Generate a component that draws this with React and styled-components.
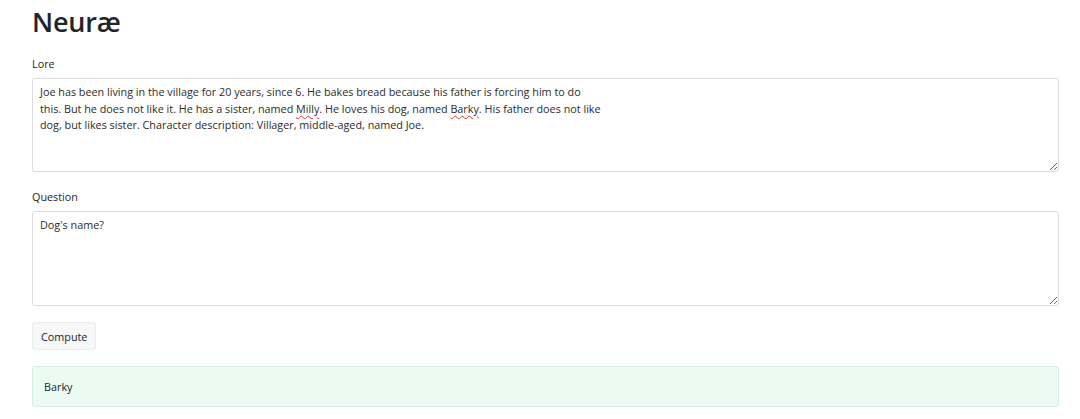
import React from "react";
import styled, { createGlobalStyle } from "styled-components";

const GlobalStyle = createGlobalStyle`
  * { box-sizing: border-box; }
  body {
    margin: 0;
    background: #fff;
    font-family: "Open Sans", "Noto Sans", sans-serif;
    color: #212529;
  }
`;

const Page = styled.div`
  padding: 4px 21px 0 32px;
  display: flex;
  flex-direction: column;
`;

const Title = styled.h1`
  font-size: 27px;
  font-weight: 600;
  line-height: 36px;
  margin: 0 0 17px 0;
  letter-spacing: -0.2px;
`;

const Field = styled.div`
  display: flex;
  flex-direction: column;
  margin-bottom: ${(p) => p.$gap || 18}px;
`;

const Label = styled.label`
  font-size: 10.8px;
  line-height: 14px;
  margin-bottom: 7px;
`;

const TextBox = styled.div`
  height: ${(p) => p.$height || 94}px;
  border: 1px solid #dcdcdc;
  border-radius: 3px;
  padding: 5px 7px;
  font-size: 10.8px;
  line-height: 16.5px;
  white-space: pre-wrap;
  color: #2b2b2b;
  resize: both;
  overflow: auto;
`;

const Misspelled = styled.span`
  text-decoration: underline wavy #d33;
  text-decoration-thickness: 1px;
  text-underline-offset: 2px;
`;

const Button = styled.button`
  align-self: flex-start;
  font-family: inherit;
  font-size: 10.8px;
  color: #212529;
  background: #f7f8f9;
  border: 1px solid #ececec;
  border-radius: 3px;
  height: 28px;
  padding: 0 8px;
  margin-bottom: 16px;
`;

const Result = styled.div`
  height: 41px;
  display: flex;
  align-items: center;
  padding: 0 11px;
  font-size: 10.8px;
  background: #ebfbf3;
  border: 1px solid #d6eee2;
  border-radius: 3px;
`;

export default function App() {
  return (
    <Page>
      <GlobalStyle />
      <Title>Neuræ</Title>
      <Field>
        <Label>Lore</Label>
        <TextBox>
          {"Joe has been living in the village for 20 years, since 6. He bakes bread because his father is forcing him to do\nthis. But he does not like it. He has a sister, named "}
          <Misspelled>Milly</Misspelled>
          {". He loves his dog, named "}
          <Misspelled>Barky</Misspelled>
          {". His father does not like\ndog, but likes sister. Character description: Villager, middle-aged, named Joe."}
        </TextBox>
      </Field>
      <Field $gap={16}>
        <Label>Question</Label>
        <TextBox $height={95}>Dog's name?</TextBox>
      </Field>
      <Button>Compute</Button>
      <Result>Barky</Result>
    </Page>
  );
}
